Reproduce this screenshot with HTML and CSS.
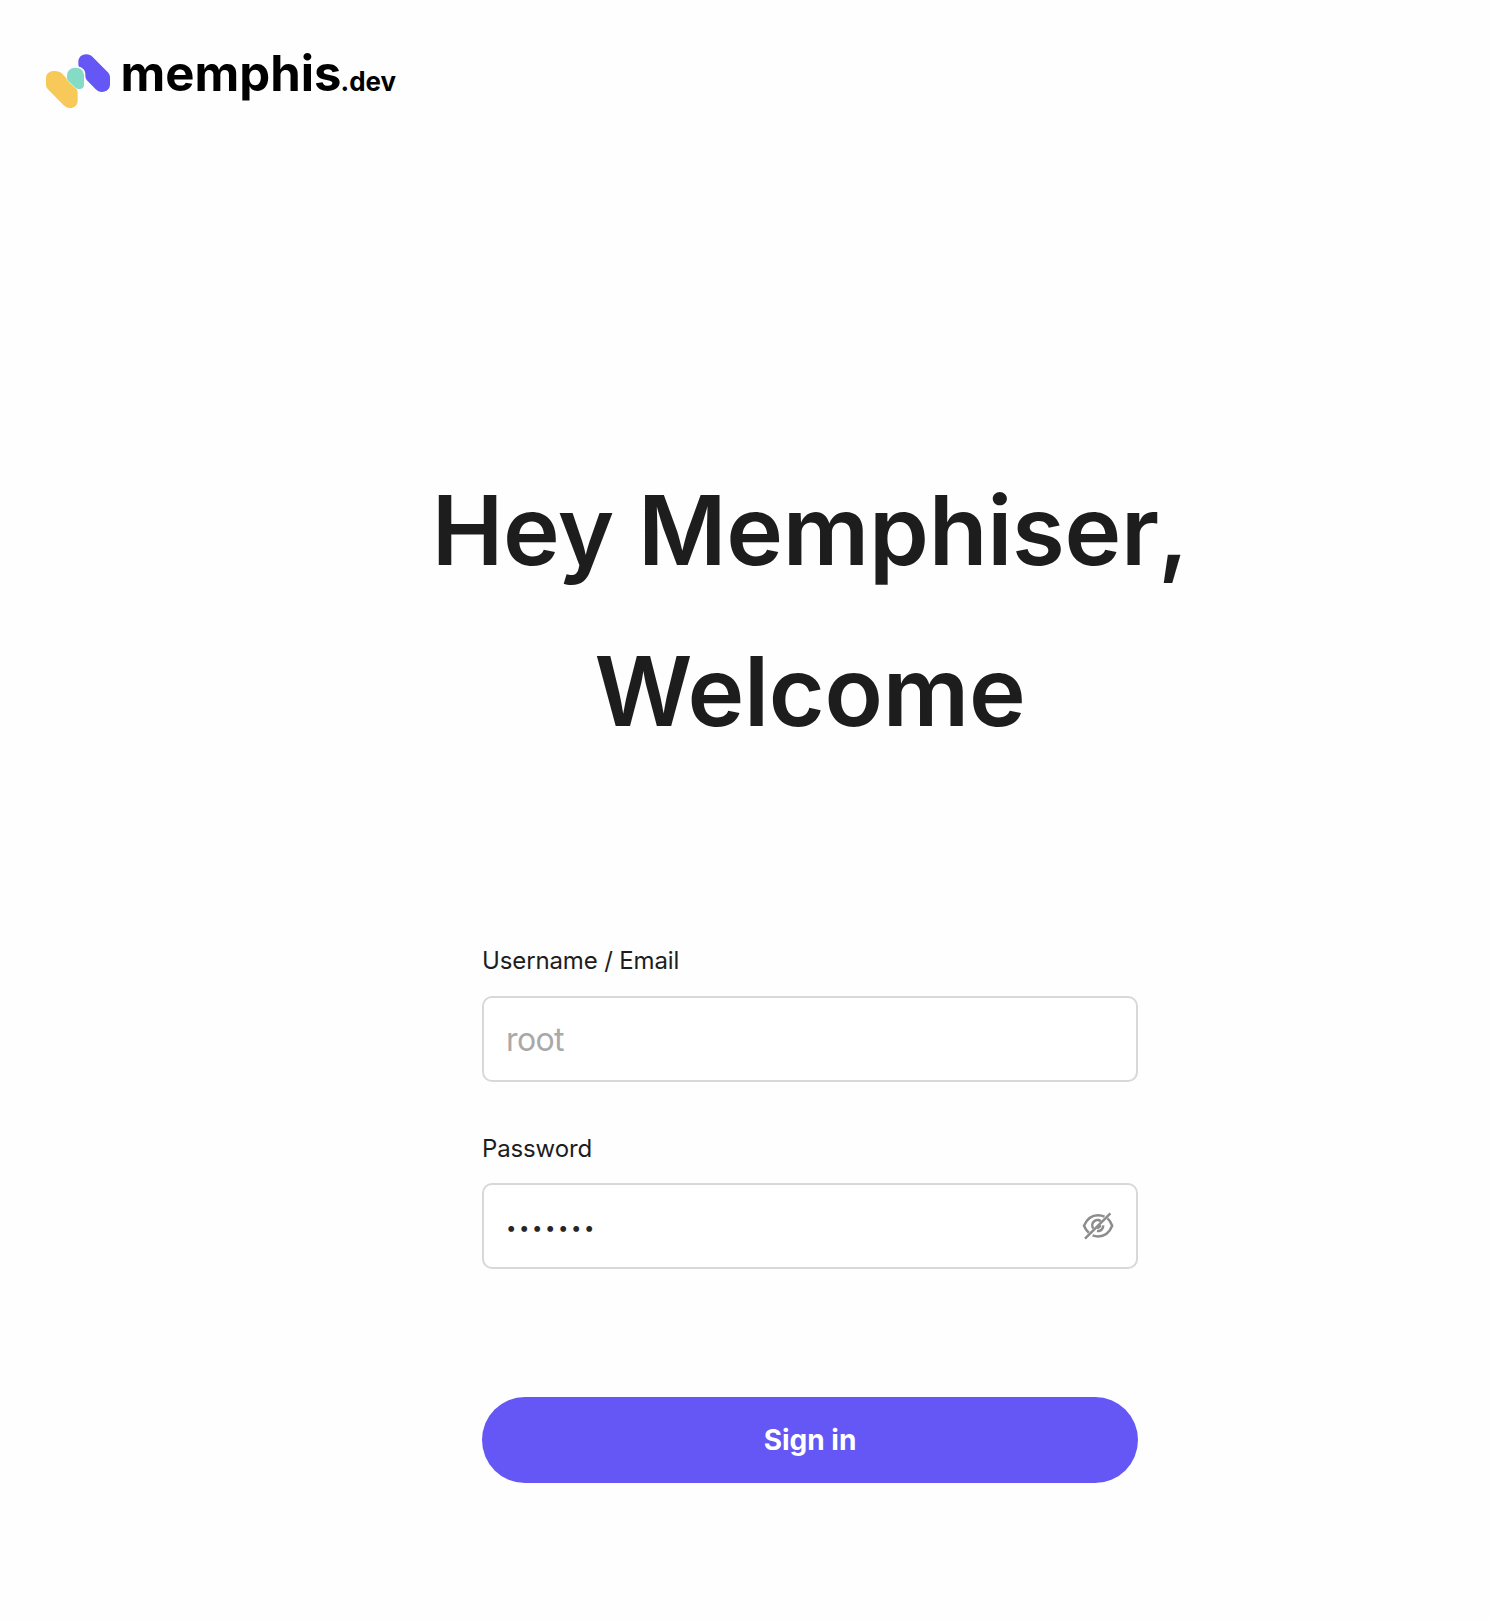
FILE: index.html
```html
<!DOCTYPE html>
<html lang="en">
<head>
<meta charset="utf-8">
<title>Memphis - Sign in</title>
<link rel="stylesheet" href="styles.css">
</head>
<body>
<header class="header">
  <svg class="logo" viewBox="0 0 360 70" role="img" aria-label="memphis.dev">
    <g transform="translate(-10 0) scale(.33333)">
      <path fill="#f6c958" d="M48 115C48 102 58 93 70 93C80 92 88 94 95 100L137 143Q143 149 143 157V182C143 195 133 204 120 204C112 204 106 201 101 196L53 147Q48 142 48 134Z"/>
      <path fill="#85dcc6" stroke="#fefefe" stroke-width="3" paint-order="stroke" d="M111 108C111 92 121 83 137 83C153 83 162 92 162 107V134C162 143 156 148 147 147C142 147 138 145 134 141L115 123Q111 119 111 115Z"/>
      <path fill="#6557f5" d="M145 66C145 52 155 43 169 43C177 43 183 46 188 51L235 98Q240 104 240 112V133C240 147 230 156 216 156C208 156 202 153 197 148L170 120Q166 115 166 107V102C166 91 158 82 147 80Q145 77 145 73Z"/>
    </g>
    <text class="logo-name" x="80.5" y="50.5" textLength="221" lengthAdjust="spacingAndGlyphs">memphis</text>
    <text class="logo-suffix" x="300.5" y="50.5" textLength="55.5" lengthAdjust="spacingAndGlyphs">.dev</text>
  </svg>
</header>
<main class="login">
  <h1 class="title">Hey Memphiser<span class="comma">,</span><br>Welcome</h1>
  <form class="form">
    <label class="label" for="user">Username / Email</label>
    <div class="field"><input class="input" id="user" type="text" placeholder="root"></div>
    <label class="label label-password" for="pass">Password</label>
    <div class="field">
      <input class="input input-password" id="pass" type="password" value="memphis">
      <svg class="eye" viewBox="0 0 32 30" fill="none" stroke="#8c8c8c" stroke-width="2.5">
        <path d="M22.5 5.6C20.6 4.7 18.5 4.2 16 4.2C9.5 4.2 4.8 8 2 14.8C3.2 17.8 4.8 20 6.8 21.8M25.5 7.4C27.5 9.2 29 11.6 30.2 14.8C27.5 21.6 22.5 25.4 16 25.4C14 25.4 12.2 25 10.6 24.4"/>
        <path d="M18.8 10.3A5.2 5.2 0 0 0 11.3 17.4M21.2 14.4A5.2 5.2 0 0 1 15 20M18 14.2A2.4 2.4 0 0 1 15.2 16.8"/>
        <path d="M3 27.7L28.4 2.3"/>
      </svg>
    </div>
    <button class="submit" type="button">Sign in</button>
  </form>
</main>
</body>
</html>
```
FILE: styles.css
```css
* { box-sizing: border-box; }
body {
  margin: 0;
  min-height: 1620px;
  background: #fefefe;
  color: #1d1d1d;
  font-family: Inter, "Liberation Sans", sans-serif;
}
.header { height: 450px; padding: 40px 0 0 40px; }
.logo { display: block; width: 360px; height: 70px; }
.logo-name, .logo-suffix { fill: #000; }
.logo-name { font-size: 49px; font-weight: 700; }
.logo-suffix { font-size: 26.5px; font-weight: 650; }
.login {
  display: flex;
  flex-direction: column;
  align-items: center;
  margin-left: 130px;
}
.title {
  margin: 0;
  font-size: 96px;
  font-weight: 600;
  line-height: 161px;
  letter-spacing: -.25px;
  text-align: center;
  white-space: nowrap;
}
.comma { margin-left: -1px; }
.form { display: flex; flex-direction: column; width: 656px; margin-top: 174px; }
.label { height: 50px; font-size: 24px; line-height: 29px; letter-spacing: -.13px; }
.label-password { padding-top: 1px; }
.field {
  display: flex;
  align-items: center;
  height: 86px;
  margin-bottom: 51px;
  padding: 0 22px;
  border: 2px solid #d8d8d8;
  border-radius: 10px;
  background: #fff;
}
.input {
  flex: 1;
  min-width: 0;
  padding: 1px 0 0;
  border: 0;
  outline: 0;
  background: none;
  color: #262626;
  font: 400 32px Inter, "Liberation Sans", sans-serif;
  letter-spacing: -.6px;
}
.input::placeholder { color: #a9a9a9; opacity: 1; }
.input-password { font-size: 18.5px; letter-spacing: 2.6px; }
.eye { width: 32px; height: 30px; }
.submit {
  height: 86px;
  margin-top: 77px;
  border: 0;
  border-radius: 43px;
  background: #6557f5;
  color: #fff;
  font: 700 28px Inter, "Liberation Sans", sans-serif;
}
```
